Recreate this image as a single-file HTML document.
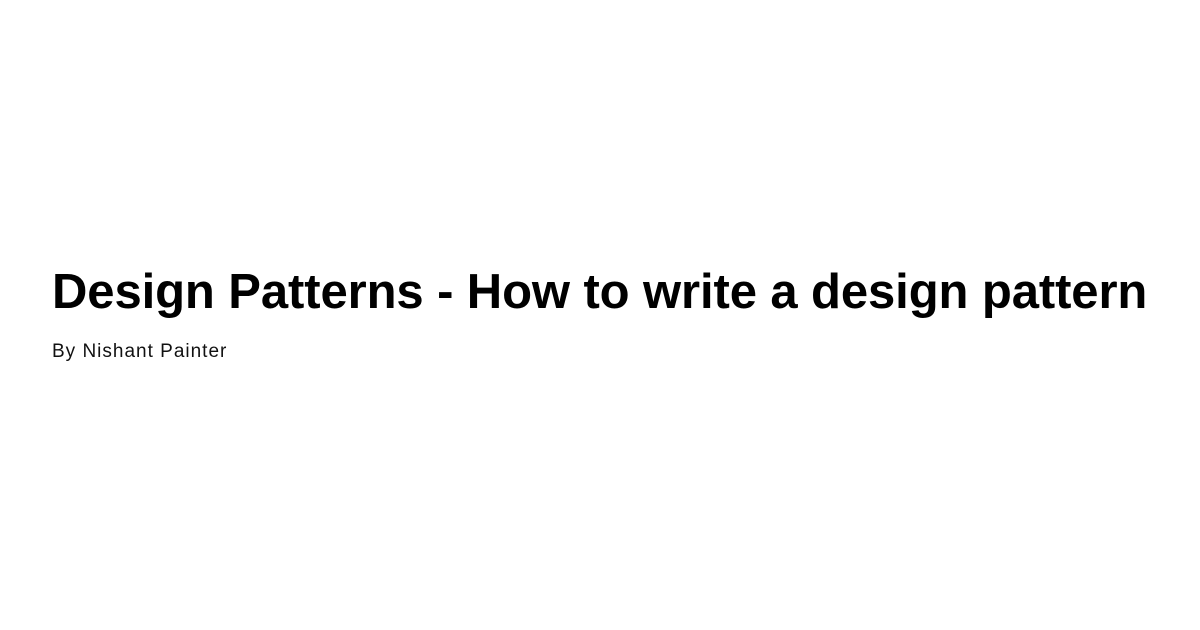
<!DOCTYPE html>
<html><head><meta charset="utf-8"><style>
html,body{margin:0;padding:0;background:#fff;width:1200px;height:630px;overflow:hidden}
body{font-family:"Liberation Sans",sans-serif;color:#000}
h1{position:absolute;left:52px;top:262px;margin:0;font-size:49px;font-weight:bold;line-height:60px;white-space:nowrap;letter-spacing:-0.1px}
p{position:absolute;left:52px;top:341px;margin:0;font-size:19px;line-height:22px;white-space:nowrap;color:#111;letter-spacing:1px}
</style></head><body>
<h1>Design Patterns - How to write a design pattern</h1>
<p>By Nishant Painter</p>
</body></html>
